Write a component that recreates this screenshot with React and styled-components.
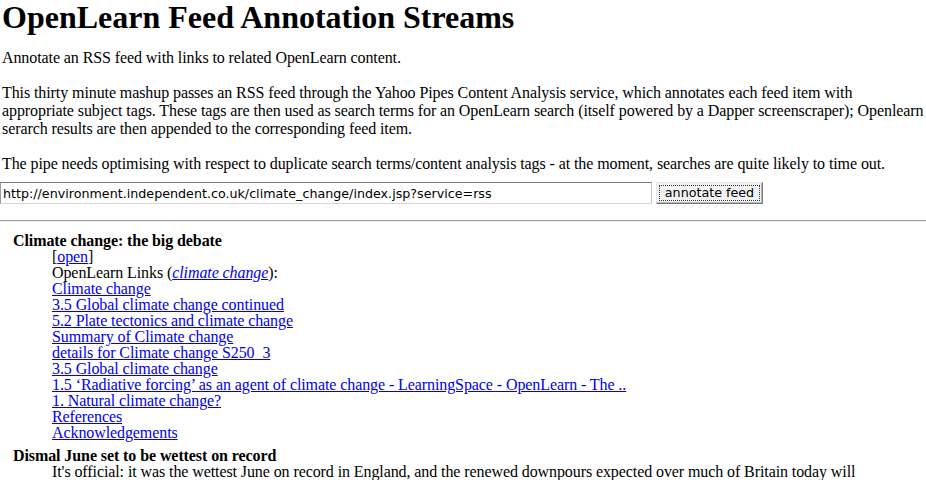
import React from "react";
import styled, { createGlobalStyle } from "styled-components";

const GlobalStyle = createGlobalStyle`
  html, body {
    margin: 0;
    padding: 0;
    background: #ffffff;
  }
  body {
    font-family: "Liberation Serif", "Times New Roman", serif;
    font-size: 16px;
    color: #000;
  }
`;

const links = [
  "Climate change",
  "3.5 Global climate change continued",
  "5.2 Plate tectonics and climate change",
  "Summary of Climate change",
  "details for Climate change S250_3",
  "3.5 Global climate change",
  "1.5 \u2018Radiative forcing\u2019 as an agent of climate change - LearningSpace - OpenLearn - The ..",
  "1. Natural climate change?",
  "References",
  "Acknowledgements",
];

const App = () => {
  return (
    <Page>
      <GlobalStyle />
      <Title>OpenLearn Feed Annotation Streams</Title>
      <Para>Annotate an RSS feed with links to related OpenLearn content.</Para>
      <Para>
        This thirty minute mashup passes an RSS feed through the Yahoo Pipes
        Content Analysis service, which annotates each feed item with
        appropriate subject tags. These tags are then used as search terms for
        an OpenLearn search (itself powered by a Dapper screenscraper);
        Openlearn serarch results are then appended to the corresponding feed
        item.
      </Para>
      <Para>
        The pipe needs optimising with respect to duplicate search
        terms/content analysis tags - at the moment, searches are quite likely
        to time out.
      </Para>
      <Form onSubmit={(e) => e.preventDefault()}>
        <UrlInput
          type="text"
          defaultValue="http://environment.independent.co.uk/climate_change/index.jsp?service=rss"
        />
        <SubmitButton type="submit">
          <ButtonLabel>annotate feed</ButtonLabel>
        </SubmitButton>
      </Form>
      <Rule />
      <Feed>
        <ItemTitle>Climate change: the big debate</ItemTitle>
        <ItemBody>
          <Line>
            [<Link href="#">open</Link>]
          </Line>
          <Line>
            OpenLearn Links (
            <Link href="#">
              <em>climate change</em>
            </Link>
            ):
          </Line>
          {links.map((l) => (
            <Line key={l}>
              <Link href="#">{l}</Link>
            </Line>
          ))}
        </ItemBody>
        <ItemTitle $gap>Dismal June set to be wettest on record</ItemTitle>
        <ItemBody>
          <Summary>
            It's official: it was the wettest June on record in England, and
            the renewed downpours expected over much of Britain today will
            bring more misery to thousands of people
          </Summary>
        </ItemBody>
      </Feed>
    </Page>
  );
};

export default App;

const Page = styled.div`
  padding: 0 2px;
`;

const Title = styled.h1`
  font-size: 32px;
  line-height: 34px;
  font-weight: bold;
  margin: 0 0 15px;
`;

const Para = styled.p`
  line-height: 18px;
  margin: 0 0 17px;
  letter-spacing: -0.09px;
`;

const Form = styled.form`
  display: flex;
  align-items: center;
  gap: 4px;
  margin: -8px 0 0 -2px;
`;

const UrlInput = styled.input`
  box-sizing: border-box;
  width: 652px;
  height: 22px;
  margin: 0;
  padding: 1px 2px;
  border: 1px solid #9a9a9a;
  border-top-color: #7c7c7c;
  border-bottom-color: #d8d8d8;
  border-right-color: #c4c4c4;
  font-family: "DejaVu Sans", "Liberation Sans", sans-serif;
  font-size: 12.7px;
  color: #000;
  outline: none;
`;

const SubmitButton = styled.button`
  box-sizing: border-box;
  width: 107px;
  height: 22px;
  margin: 0;
  padding: 2px;
  background: #f2f2f2;
  border: 1px solid #7a7a7a;
  border-top-color: #e8e8e8;
  border-left-color: #e8e8e8;
  box-shadow: inset -1px -1px 0 #b5b5b5;
  font-family: "DejaVu Sans", "Liberation Sans", sans-serif;
  font-size: 12.7px;
  color: #000;
`;

const ButtonLabel = styled.span`
  display: block;
  border: 1px dotted #333;
  line-height: 14px;
  padding: 0;
  white-space: nowrap;
`;

const Rule = styled.hr`
  margin: 16px 0 0 -2px;
  width: calc(100% + 4px);
  border: none;
  border-top: 1px solid #9a9a9a;
  border-bottom: 1px solid #eeeeee;
  height: 0;
`;

const Feed = styled.div`
  padding: 11px 0 0 11px;
  line-height: 16px;
  letter-spacing: -0.09px;
`;

const ItemTitle = styled.div`
  font-weight: bold;
  margin-top: ${(p) => (p.$gap ? "7px" : "0")};
`;

const ItemBody = styled.div`
  padding-left: 39px;
`;

const Line = styled.div``;

const Link = styled.a`
  color: #0000ee;
  text-decoration: underline;
`;

const Summary = styled.div`
  max-width: 820px;
`;
